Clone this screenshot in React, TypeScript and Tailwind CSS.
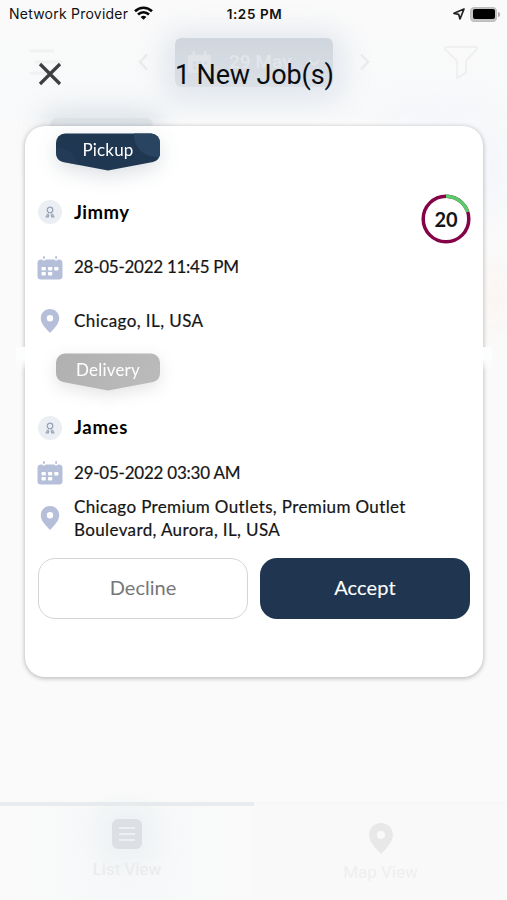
import type { ReactNode } from "react";

function PersonIcon() {
  return (
    <span className="flex size-6 items-center justify-center rounded-full bg-[#ebeff3]">
      <svg width="10" height="12" viewBox="0 0 10 12" fill="none" stroke="#98a3b9" strokeWidth="1.300">
        <circle cx="5" cy="4" r="2.800" />
        <path d="M.6 10.900h2.600L3.800 9M9.400 10.900H6.800L6.200 9M1.400 10.500C1.600 9 2.600 8.200 3.800 7.800M8.600 10.500C8.400 9 7.400 8.200 6.200 7.800" />
      </svg>
    </span>
  );
}

function CalendarIcon() {
  return (
    <svg className="shrink-0" width="26" height="24" viewBox="0 0 26 24" fill="#b5bfd9">
      <rect x="6" y="0" width="1.800" height="3" rx=".9" />
      <rect x="18.200" y="0" width="1.800" height="3" rx=".9" />
      <path d="M4 3.500h1.200c.3 1.300 3.100 1.300 3.400 0h8.800c.3 1.300 3.100 1.300 3.400 0H22a3.500 3.500 0 0 1 3.500 3.500v13a3.500 3.500 0 0 1-3.500 3.500H4A3.500 3.500 0 0 1 .5 20V7A3.500 3.500 0 0 1 4 3.500Z" />
      <g fill="#fff">
        <rect x="4.500" y="11" width="4.300" height="3.400" rx=".8" />
        <rect x="11" y="11" width="4.300" height="3.400" rx=".8" />
        <rect x="17.200" y="11" width="4.300" height="3.400" rx=".8" />
        <rect x="4.500" y="16" width="4.300" height="3.400" rx=".8" />
        <rect x="11" y="16" width="4.300" height="3.400" rx=".8" />
      </g>
    </svg>
  );
}

function PinIcon({ className }: { className: string }) {
  return (
    <svg viewBox="0 0 20 24" className={className} fill="currentColor" fillRule="evenodd">
      <path d="M10 0c5.200 0 9.200 4 9.200 9.200 0 4.600-3.200 8-5.900 11.300L10 24l-3.300-3.500C4 17.200.8 13.800.8 9.200.8 4 4.800 0 10 0Zm0 6a3.200 3.200 0 1 0 0 6.400A3.200 3.200 0 0 0 10 6Z" />
    </svg>
  );
}

function Row({ icon, className, children }: { icon: ReactNode; className: string; children: ReactNode }) {
  return (
    <div className={"flex items-center " + className}>
      <span className="flex w-[36px] shrink-0 justify-start">
        <span className="flex w-[24px] justify-center">{icon}</span>
      </span>
      {children}
    </div>
  );
}

function Badge({ label, grey = false }: { label: string; grey?: boolean }) {
  return (
    <div
      className={
        "relative ml-[30px] h-[38px] w-[106px] " +
        (grey
          ? "drop-shadow-[0_5px_8px_rgba(90,90,90,0.16)]"
          : "drop-shadow-[0_6px_10px_rgba(31,54,80,0.16)]")
      }
    >
      <svg className="absolute inset-0" width="106" height="38" viewBox="0 0 106 38">
        <defs>
          <linearGradient id="silver" x1="0" y1="0" x2="1" y2="0.3">
            <stop offset="0" stopColor="#b0b0b0" />
            <stop offset="1" stopColor="#bababa" />
          </linearGradient>
          <clipPath id="tag">
            <path d="M10 .5h86a9 9 0 0 1 9 9V20q0 7-7 9L53 37.500 8 29q-7-2-7-9V9.500a9 9 0 0 1 9-9Z" />
          </clipPath>
        </defs>
        <g clipPath="url(#tag)">
          <rect width="106" height="38" fill={grey ? "url(#silver)" : "#203752"} />
          {!grey && <circle cx="101" cy="2" r="22" fill="#294461" />}
          {!grey && <circle cx="3" cy="35" r="20" fill="#284260" opacity=".4" />}
        </g>
      </svg>
      <span className="relative flex h-[33px] items-center justify-center text-[17px] tracking-[0.200px] text-white">
        {label}
      </span>
    </div>
  );
}

function Backdrop() {
  return (
    <div className="absolute inset-0 flex flex-col overflow-hidden bg-[#fafafa] font-[Roboto,sans-serif]">
      <div className="flex h-[118px] items-start bg-linear-to-b from-[#fafafa] to-[#f8f9fa] pt-[38px]">
        <svg className="mt-[10px] ml-[29px]" width="34" height="28" viewBox="0 0 34 28" stroke="#f0f1f1" strokeWidth="3" strokeLinecap="round">
          <path d="M2 3h22M7 14h25M2 25h18" />
        </svg>
        <svg className="mt-[15px] ml-[74px]" width="12" height="18" fill="none" stroke="#e9ebed" strokeWidth="2.500">
          <path d="M10 1.500 3 9l7 7.500" />
        </svg>
        <div className="ml-[26px] flex h-[49px] w-[158px] items-center rounded-[6px] bg-linear-to-b from-[#d0d6dd] to-[#dae0e6] pl-3 text-[19px] font-medium text-[#e1e6ea] shadow-[0_4px_28px_10px_rgba(150,170,195,0.24)]">
          <svg width="25" height="23" viewBox="0 0 26 24" fill="#e0e4e9">
            <path d="M6 0h2v4h10V0h2v4h2q3 0 3 3v13q0 3-3 3H4q-3 0-3-3V7q0-3 3-3h2Z" />
            <path fill="#d3d9e0" d="M6 11h4v3H6zm6 0h3v3h-3zm6 0h3v3h-3zM6 16h4v3H6zm6 0h3v3h-3z" />
          </svg>
          <span className="ml-[17px] whitespace-nowrap">29 May</span>
          <svg className="ml-[17px]" width="12" height="8" fill="none" stroke="#e0e5e9" strokeWidth="2"><path d="m1 1 5 5 5-5" /></svg>
        </div>
        <svg className="mt-[15px] ml-[26px]" width="12" height="18" fill="none" stroke="#e9ebed" strokeWidth="2.500">
          <path d="m2 1.500 7 7.500-7 7.500" />
        </svg>
        <svg className="mt-[8px] ml-[73px]" width="34" height="33" viewBox="0 0 34 33" fill="none" stroke="#f0f0f1" strokeWidth="2.200" strokeLinejoin="round">
          <path d="M1 1h32v2L22 15v12l-9 5V15L1 3Z" />
        </svg>
      </div>
      <div className="ml-[50px] h-10 w-[103px] rounded-t-[8px] bg-[#dce1e5] shadow-[0_0_26px_8px_rgba(120,145,170,0.22)]" />
      <div className="-mt-10 ml-auto h-[100px] w-[130px] rounded-full bg-[#eef1ff]/50 blur-xl" />
      <div className="mt-[50px] ml-auto h-[60px] w-6 bg-[#ffefe7]/50 blur-lg" />
      <div className="mt-auto flex h-[98px] text-[17px]">
        <div className="flex w-[254px] flex-col items-center border-t-4 border-[#e9ecee] bg-linear-to-r from-[#fafafa] via-[#f6f8f9] to-[#fafafa] pt-[13px] text-[#e9ebed]">
          <span className="flex h-[30px] w-[30px] flex-col items-center justify-center gap-[4px] rounded-[6px] bg-[#dce0e5] shadow-[0_0_26px_14px_rgba(215,224,233,0.25)]">
            <i className="h-[2px] w-4 bg-[#edf0f2]" />
            <i className="h-[2px] w-4 bg-[#edf0f2]" />
            <i className="h-[2px] w-4 bg-[#edf0f2]" />
          </span>
          <span className="mt-[7px] leading-[26px]">List View</span>
        </div>
        <div className="flex flex-1 flex-col items-center border-t-2 border-[#f7f7f7] bg-[#f9f9f9] pt-[19px] text-[#efefef]">
          <PinIcon className="h-[31px] w-[26px] text-[#e8e8e8]" />
          <span className="mt-[5px] leading-[26px]">Map View</span>
        </div>
      </div>
    </div>
  );
}

function StatusBar() {
  return (
    <div className="grid h-7 grid-cols-[1fr_auto_1fr] items-center pr-[7px] pl-[9px] font-[Inter,sans-serif] text-[13.500px] text-[#111]">
      <div className="flex items-center">
        <span className="-mt-px w-[120px] text-[14px] tracking-[0.230px] whitespace-nowrap">Network Provider</span>
        <svg className="-mt-[2px] ml-[5px]" width="19" height="14" viewBox="0 0 19 14" fill="none" stroke="#080808" strokeWidth="2.700">
          <path d="M1 5.200c5-4.600 12-4.600 17 0M4 8.600c3.300-3 7.700-3 11 0" />
          <path d="M6.600 11q2.900-2.400 5.800 0l-2.900 2.800Z" fill="#080808" stroke="none" />
        </svg>
      </div>
      <span className="text-[13.500px] font-semibold tracking-[0.600px]">1:25 PM</span>
      <div className="flex items-center justify-end">
        <svg width="12" height="12" viewBox="0 0 12 12" fill="none" stroke="#222" strokeWidth="1.700" strokeLinejoin="round">
          <path d="M11 1 1 5.300l4.700 1.100L7 11Z" />
        </svg>
        <span className="ml-[5px] flex h-[15px] w-[27px] rounded-[4px] border border-[#bdbdbd] bg-[#c4c4c4] p-[1.500px]">
          <span className="flex-1 rounded-[2px] bg-black" />
        </span>
        <span className="ml-px h-[5px] w-[2px] rounded-r-full bg-[#aaa]" />
      </div>
    </div>
  );
}

export default function App() {
  return (
    <div className="relative h-[900px] w-[507px] overflow-hidden">
      <Backdrop />
      <div className="relative flex h-full flex-col">
        <StatusBar />
        <header className="flex h-[98px] items-start pt-[30px]">
          <svg className="mt-[4px] ml-[38px]" width="24" height="24" fill="none" stroke="#3d3e40" strokeWidth="3.200">
            <path d="m2 2 20 20M22 2 2 22" />
          </svg>
          <h1 className="ml-[113px] font-[Roboto,sans-serif] text-[27px] leading-[34px] tracking-[-0.150px] whitespace-nowrap text-[#090d12]">
            1 New Job(s)
          </h1>
        </header>
        <main className="relative mx-[25px] h-[551px] w-[458px] rounded-[20px] bg-white font-[Lato,sans-serif] text-[#151515] shadow-[0_1px_5px_rgba(0,0,0,0.3)]">
          <div className="absolute top-[221px] -left-[9px] h-6 w-[9px] bg-linear-to-b from-[#fcfdfd] via-[#fcfdfd] to-transparent" />
          <div className="absolute top-[221px] -right-[9px] h-6 w-[9px] bg-linear-to-b from-[#fcfdfd] via-[#fcfdfd] to-transparent" />
          <div className="relative flex h-full flex-col px-[13px] pt-[7px] [-webkit-text-stroke:0.200px]">
            <div className="-ml-[13px] flex [-webkit-text-stroke:0]"><Badge label="Pickup" /></div>
            <div className="mt-[23px] flex h-[50px] items-start justify-between">
              <Row icon={<PersonIcon />} className="h-9">
                <span className="pt-px text-[18.500px] font-bold tracking-[0.500px] text-black [-webkit-text-stroke:0]">Jimmy</span>
              </Row>
              <div className="relative -mr-px size-[50px]">
                <svg className="absolute inset-0" width="50" height="50" fill="none" strokeWidth="3.500">
                  <circle cx="25" cy="25" r="22.800" stroke="#850347" />
                  <path d="M25 2.200A22.800 22.800 0 0 1 46.700 18" stroke="#5acb69" />
                </svg>
                <span className="relative flex size-full items-center justify-center text-[20px] font-bold text-[#151515] [-webkit-text-stroke:0]">20</span>
              </div>
            </div>
            <Row icon={<CalendarIcon />} className="mt-[12px] h-[24px] text-[17px] tracking-[-0.270px]">
              <span className="-mt-[2px]">28-05-2022 11:45 PM</span>
            </Row>
            <Row icon={<PinIcon className="h-6 w-5 text-[#b5bfd9]" />} className="mt-[28px] h-[26px] text-[17px] tracking-[0.420px]">
              <span>Chicago, IL, USA</span>
            </Row>
            <div className="mt-[19px] -ml-[13px] flex [-webkit-text-stroke:0]"><Badge label="Delivery" grey /></div>
            <Row icon={<PersonIcon />} className="mt-[25px] h-6">
              <span className="text-[18.500px] font-bold tracking-[0.700px] text-black [-webkit-text-stroke:0]">James</span>
            </Row>
            <Row icon={<CalendarIcon />} className="mt-[21px] h-6 text-[17px] tracking-[-0.230px]">
              <span>29-05-2022 03:30 AM</span>
            </Row>
            <Row icon={<PinIcon className="h-6 w-5 text-[#b5bfd9]" />} className="mt-[10px] h-[46px] text-[17px] leading-[23px] tracking-[0.370px]">
              <span className="whitespace-nowrap">
                Chicago Premium Outlets, Premium Outlet
                <br />
                Boulevard, Aurora, IL, USA
              </span>
            </Row>
            <div className="mt-[17px] grid h-[61px] grid-cols-2 gap-[12px] text-[20px]">
              <button className="rounded-[17px] border-[1.500px] border-[#d5d5d5] pb-[3px] text-[#777] [-webkit-text-stroke:0]">Decline</button>
              <button className="rounded-[17px] bg-[#203650] pb-[3px] tracking-[0.150px] text-white [-webkit-text-stroke:0.100px]">Accept</button>
            </div>
          </div>
        </main>
      </div>
    </div>
  );
}
